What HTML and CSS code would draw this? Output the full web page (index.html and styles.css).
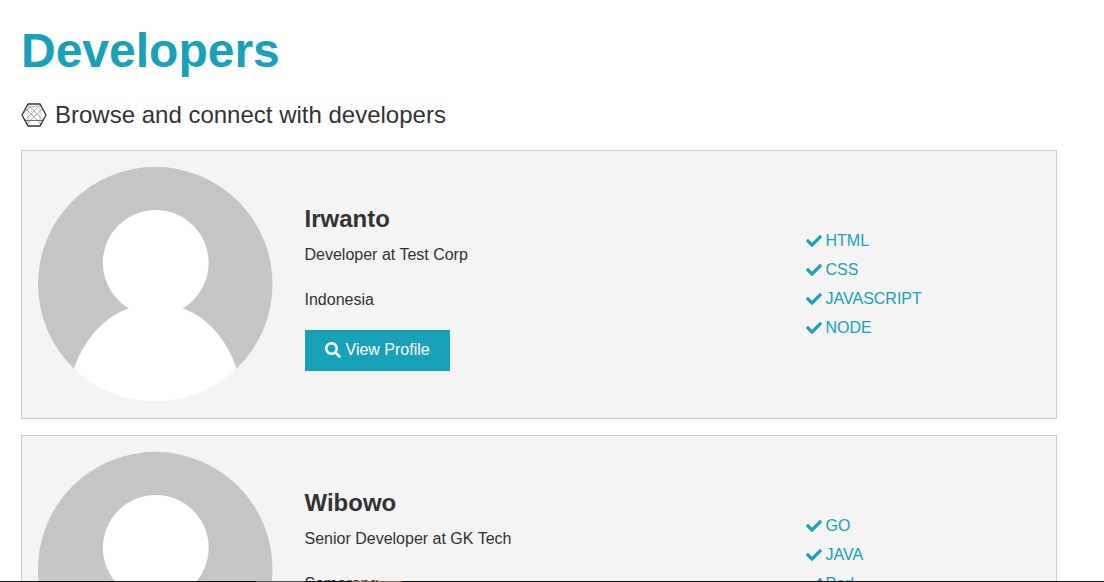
FILE: index.html
```html
<!DOCTYPE html>
<html lang="en">
<head>
<meta charset="utf-8">
<title>Developers</title>
<link rel="stylesheet" href="styles.css">
</head>
<body>
<svg class="sprite" aria-hidden="true">
  <symbol id="check" viewBox="0 0 512 512"><path d="M173.898 439.404l-166.4-166.4c-9.997-9.997-9.997-26.206 0-36.204l36.203-36.204c9.997-9.998 26.207-9.998 36.204 0L192 312.69 432.095 72.596c9.997-9.997 26.207-9.997 36.204 0l36.203 36.204c9.997 9.997 9.997 26.206 0 36.204l-294.4 294.401c-9.998 9.997-26.207 9.997-36.204-.001z"/></symbol>
  <symbol id="search" viewBox="0 0 512 512"><path d="M505 442.700L405.300 343c-4.500-4.500-10.600-7-17-7H372c27.600-35.300 44-79.700 44-128C416 93.100 322.900 0 208 0S0 93.100 0 208s93.100 208 208 208c48.300 0 92.700-16.400 128-44v16.300c0 6.400 2.500 12.500 7 17l99.700 99.700c9.400 9.400 24.600 9.400 33.900 0l28.300-28.300c9.400-9.400 9.400-24.600.1-34zM208 336c-70.700 0-128-57.200-128-128 0-70.700 57.200-128 128-128 70.700 0 128 57.200 128 128 0 70.700-57.200 128-128 128z"/></symbol>
  <symbol id="person" viewBox="0 0 235 235" overflow="visible">
    <path d="M36 202A117.500 117.500 0 1 1 199 202Z" fill="#c5c5c5"/>
    <circle cx="118" cy="96" r="53" fill="#fff"/>
    <path d="M93 141C66 149 45 175 36 202A117.500 117.500 0 0 0 199 202C190 175 170 149 143 141Z" fill="#fff"/>
  </symbol>
</svg>
<main class="page">
  <h1 class="title">Developers</h1>
  <p class="lead">
    <svg class="lead-icon" viewBox="0 0 26 24" aria-hidden="true" fill="none">
      <path d="M7 2V22M19 2V22" stroke="#bbb" stroke-width=".8"/>
      <path d="M4 5L20 21M22 5L6 21M7 2L22 17M19 2L4 17M1 12L9 4L17 3" stroke="#777" stroke-width=".6"/>
      <path d="M4 17.500H22" stroke="#555" stroke-width=".8"/>
      <path d="M1 12L7 1H19L25 12L19 23H7Z" stroke="#333" stroke-width="1.300"/>
    </svg>
    Browse and connect with developers
  </p>

  <section class="profiles">
    <article class="profile">
      <svg class="avatar" role="img" aria-label="Irwanto"><use href="#person"/></svg>
      <div class="details">
        <h2 class="name">Irwanto</h2>
        <p class="job">Developer at Test Corp</p>
        <p class="place">Indonesia</p>
        <a class="button" href="#irwanto"><svg class="icon" aria-hidden="true"><use href="#search"/></svg> View Profile</a>
      </div>
      <ul class="skills">
        <li><svg class="icon" aria-hidden="true"><use href="#check"/></svg> HTML</li>
        <li><svg class="icon" aria-hidden="true"><use href="#check"/></svg> CSS</li>
        <li><svg class="icon" aria-hidden="true"><use href="#check"/></svg> JAVASCRIPT</li>
        <li><svg class="icon" aria-hidden="true"><use href="#check"/></svg> NODE</li>
      </ul>
    </article>

    <article class="profile">
      <svg class="avatar" role="img" aria-label="Wibowo"><use href="#person"/></svg>
      <div class="details">
        <h2 class="name">Wibowo</h2>
        <p class="job">Senior Developer at GK Tech</p>
        <p class="place">Semarang</p>
        <a class="button" href="#wibowo"><svg class="icon" aria-hidden="true"><use href="#search"/></svg> View Profile</a>
      </div>
      <ul class="skills">
        <li><svg class="icon" aria-hidden="true"><use href="#check"/></svg> GO</li>
        <li><svg class="icon" aria-hidden="true"><use href="#check"/></svg> JAVA</li>
        <li><svg class="icon" aria-hidden="true"><use href="#check"/></svg> Perl</li>
        <li><svg class="icon" aria-hidden="true"><use href="#check"/></svg> C</li>
      </ul>
    </article>
  </section>
</main>
<div class="edge"></div>
</body>
</html>
```
FILE: styles.css
```css
* {
  box-sizing: border-box;
  margin: 0;
  padding: 0;
}

body {
  height: 100vh;
  overflow: hidden;
  background: #fff;
  color: #333;
  font-family: "Liberation Sans", Arial, sans-serif;
  font-size: 16px;
  line-height: 26px;
}

.sprite {
  position: absolute;
  width: 0;
  height: 0;
}

.page {
  padding: 22px 47px 0 21px;
}

.title {
  margin-bottom: 16px;
  color: #17a2b8;
  font-size: 48px;
  line-height: 58px;
}

.lead {
  display: flex;
  align-items: center;
  gap: 8px;
  margin-bottom: 16px;
  font-size: 24px;
  line-height: 38px;
}

.lead-icon {
  width: 26px;
  height: 24px;
}

.profiles {
  display: grid;
  gap: 16px;
}

.profile {
  display: grid;
  grid-template-columns: 2fr 4fr 2fr;
  align-items: center;
  gap: 32px;
  padding: 16px;
  border: 1px solid #ccc;
  background: #f4f4f4;
}

.avatar {
  display: block;
  width: 100%;
  aspect-ratio: 1;
  overflow: visible;
}

.details {
  padding-top: 2px;
}

.name {
  margin-bottom: 4px;
  font-size: 24px;
  line-height: 38px;
}

.place {
  margin: 19px 0 17px;
}

.button {
  display: inline-flex;
  align-items: center;
  gap: 5px;
  height: 41px;
  padding: 0 20px;
  background: #17a2b8;
  color: #fff;
  text-decoration: none;
  vertical-align: top;
}

.skills {
  display: grid;
  gap: 3px;
  padding-top: 1px;
  color: #17a2b8;
  list-style: none;
}

.skills li {
  display: flex;
  align-items: center;
  gap: 4px;
}

.icon {
  width: 16px;
  height: 16px;
  fill: currentColor;
}

.edge {
  position: fixed;
  right: 0;
  bottom: 0;
  left: 0;
  height: 1px;
  background: linear-gradient(90deg, #101010 256px, #555 256px 305px, #101010 305px 352px, #a0602c 352px 402px, #101010 402px);
}
```
